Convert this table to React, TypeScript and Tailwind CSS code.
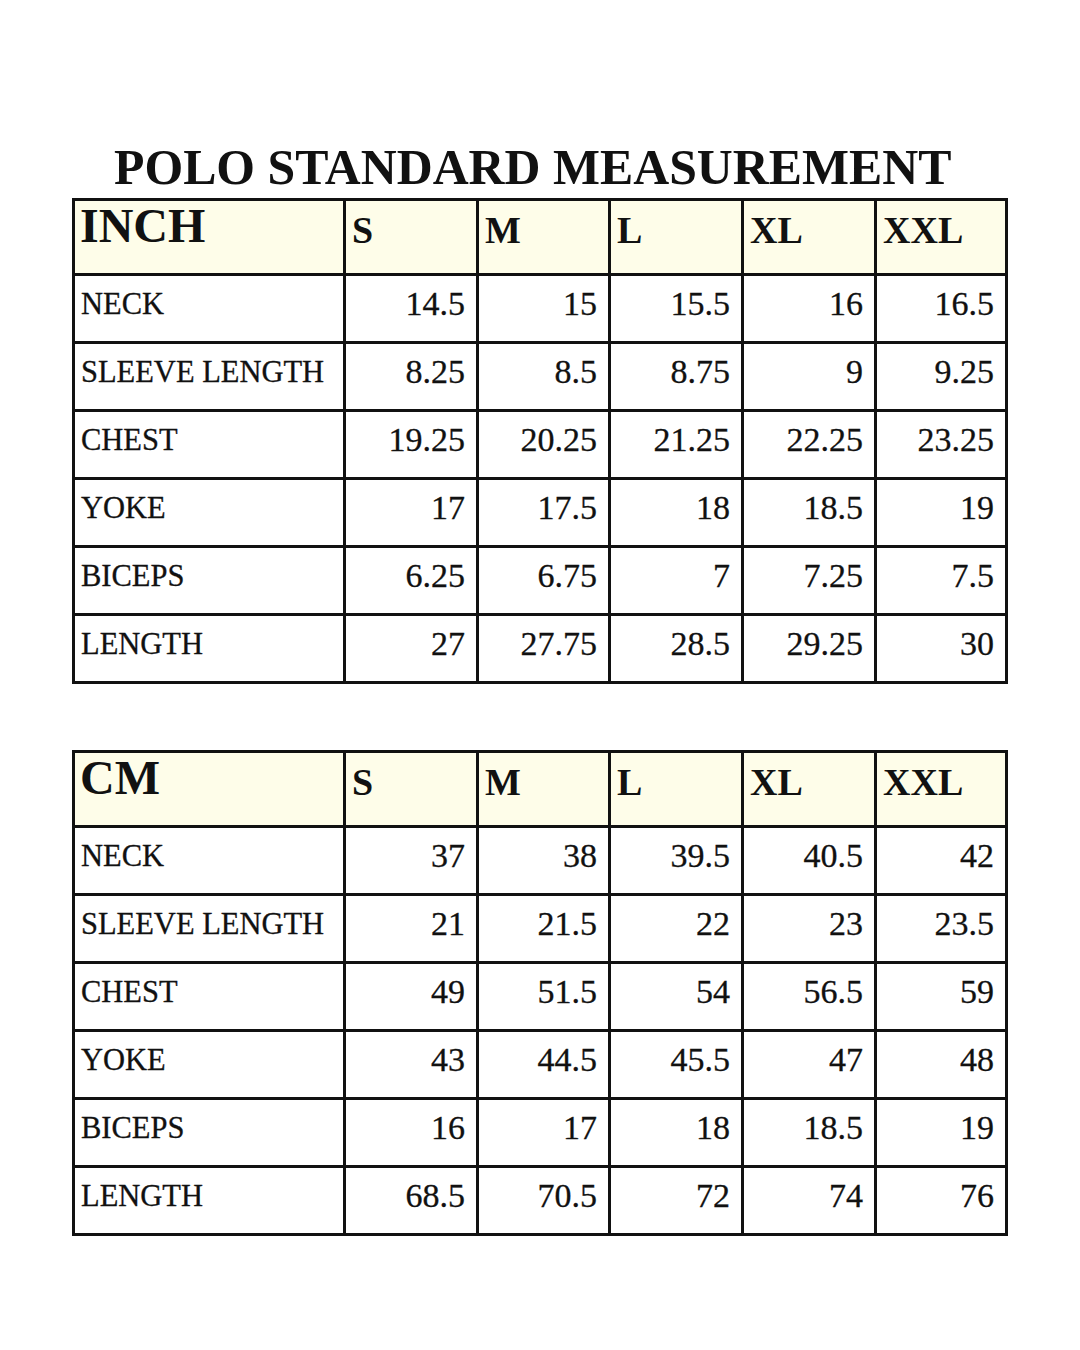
import React from "react";

const SIZES = ["S", "M", "L", "XL", "XXL"];

interface Row {
  label: string;
  values: string[];
}

const INCH_ROWS: Row[] = [
  { label: "NECK", values: ["14.5", "15", "15.5", "16", "16.5"] },
  { label: "SLEEVE LENGTH", values: ["8.25", "8.5", "8.75", "9", "9.25"] },
  { label: "CHEST", values: ["19.25", "20.25", "21.25", "22.25", "23.25"] },
  { label: "YOKE", values: ["17", "17.5", "18", "18.5", "19"] },
  { label: "BICEPS", values: ["6.25", "6.75", "7", "7.25", "7.5"] },
  { label: "LENGTH", values: ["27", "27.75", "28.5", "29.25", "30"] },
];

const CM_ROWS: Row[] = [
  { label: "NECK", values: ["37", "38", "39.5", "40.5", "42"] },
  { label: "SLEEVE LENGTH", values: ["21", "21.5", "22", "23", "23.5"] },
  { label: "CHEST", values: ["49", "51.5", "54", "56.5", "59"] },
  { label: "YOKE", values: ["43", "44.5", "45.5", "47", "48"] },
  { label: "BICEPS", values: ["16", "17", "18", "18.5", "19"] },
  { label: "LENGTH", values: ["68.5", "70.5", "72", "74", "76"] },
];

function SizeTable({ unit, rows }: { unit: string; rows: Row[] }) {
  return (
    <div className="grid grid-cols-[268px_130px_129px_130px_130px_128px] grid-rows-[72px_repeat(6,65px)] gap-[3px] p-[3px] bg-[#111] w-[936px]">
      <div className="bg-[#fefde9] pl-[5px] pt-[1px] text-[48px] leading-none font-bold">
        {unit}
      </div>
      {SIZES.map((s) => (
        <div key={s} className="bg-[#fefde9] pl-[6px] pt-[10px] text-[38px] leading-none font-bold">
          {s}
        </div>
      ))}
      {rows.map((row) => (
        <React.Fragment key={row.label}>
          <div className="bg-white pl-[6px] pt-[13px] text-[30.5px] leading-none [-webkit-text-stroke:0.3px_#111]">
            {row.label}
          </div>
          {row.values.map((v, i) => (
            <div
              key={i}
              className="bg-white pr-[11px] pt-[11px] text-right text-[34px] leading-none [-webkit-text-stroke:0.3px_#111]"
            >
              {v}
            </div>
          ))}
        </React.Fragment>
      ))}
    </div>
  );
}

export default function App() {
  return (
    <main className="w-[1080px] h-[1350px] bg-white text-[#111] font-['Liberation_Serif','Times_New_Roman',serif]">
      <div className="pt-[143px] pl-[114px]">
        <h1 className="text-[49.8px] leading-none font-bold whitespace-nowrap">
          POLO STANDARD MEASUREMENT
        </h1>
      </div>
      <div className="pl-[72px] pt-[5px]">
        <SizeTable unit="INCH" rows={INCH_ROWS} />
      </div>
      <div className="pl-[72px] pt-[66px]">
        <SizeTable unit="CM" rows={CM_ROWS} />
      </div>
    </main>
  );
}
